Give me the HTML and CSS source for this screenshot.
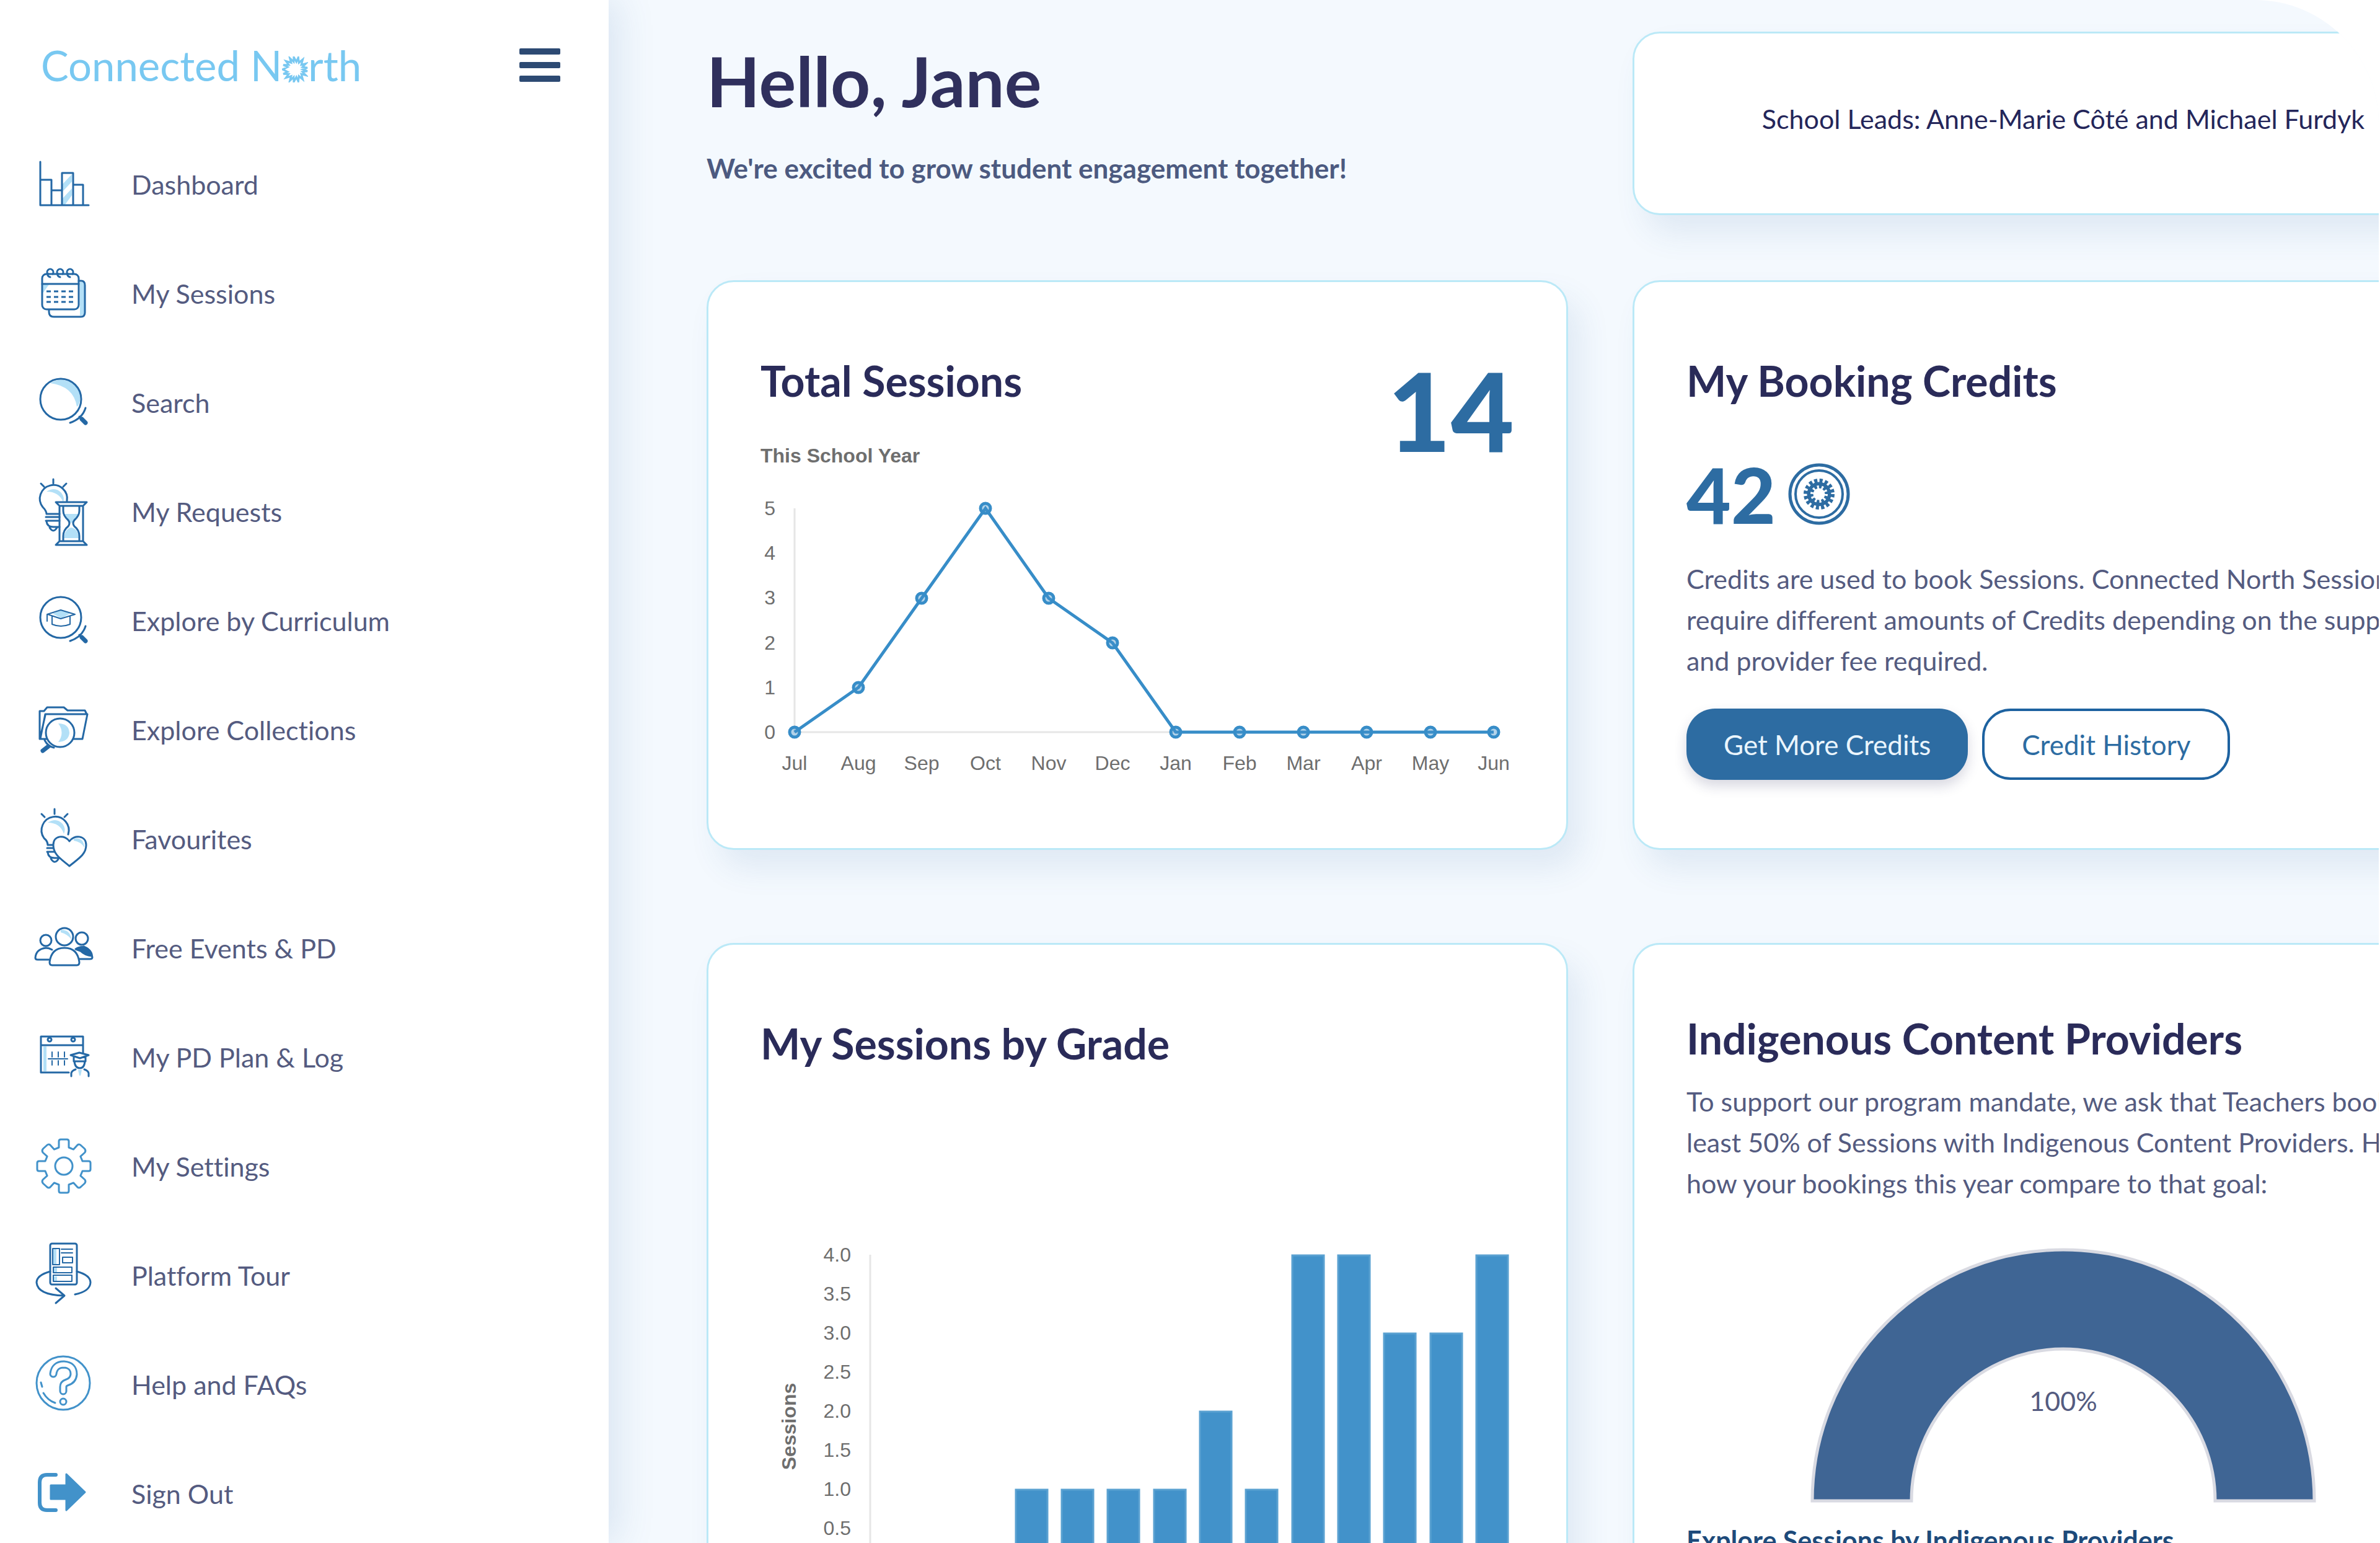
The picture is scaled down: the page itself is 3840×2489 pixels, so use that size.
FILE: index.html
```html
<!DOCTYPE html>
<html lang="en">
  <head>
    <meta charset="UTF-8" />
    <meta name="viewport" content="width=device-width, initial-scale=1.0" />
    <title>Connected North</title>

    <link rel="stylesheet" href="styles.css">
  </head>
  <body>
    <aside class="sidebar">
      <div class="sidebar-head">
        <a href="#" class="logo" aria-label="Connected North">
          Connected N<svg class="logo-sun" viewBox="0 0 40 40" aria-hidden="true">
            <path d="M32.0 20.0L39.0 22.5L31.4 23.7L36.7 29.0L29.7 27.1L31.9 35.3L26.0 30.4L25.0 38.3L22.1 31.8L18.1 39.0L17.9 31.8L12.1 37.3L14.0 30.4L6.1 32.8L10.3 27.1L2.0 26.8L8.6 23.7L1.0 20.0L8.6 16.3L2.0 13.2L10.3 12.9L6.1 7.2L14.0 9.6L12.1 2.7L17.9 8.2L18.1 1.0L22.1 8.2L25.0 1.7L26.0 9.6L31.9 4.7L29.7 12.9L36.7 11.0L31.4 16.3L39.0 17.5Z" stroke-width="3" />
          </svg>rth
        </a>
        <button class="menu-btn" aria-label="Toggle menu">
          <span></span>
          <span></span>
          <span></span>
        </button>
      </div>

      <nav>
        <ul class="nav">
          <li>
            <a href="#">
              <svg class="icon" viewBox="0 0 100 100">
                <path class="tint" d="M48 50L63 34V46L48 62ZM48 73L63 57V68L52 83H48Z" />
                <path d="M12 14V84H90M12 43H30V84M30 60H47M47 84V32H65V84M65 51H81V84" />
              </svg>
              <span>Dashboard</span>
            </a>
          </li>
          <li>
            <a href="#">
              <svg class="icon" viewBox="0 0 100 100">
                <path class="tint" d="M76 32H80Q83 32 83 37V80Q83 86 76 86ZM16 36H26L16 50Z" />
                <rect x="15" y="19" width="59" height="57" rx="7" />
                <path d="M15 35H74M74 30H78Q84 30 84 37V81Q84 88 77 88H34Q26 88 26 80V77" />
                <path d="M24 19A5 5 0 1 1 32 19M28 24Q23 23 24 18M40 19A5 5 0 1 1 48 19M44 24Q39 23 40 18M56 19A5 5 0 1 1 64 19M60 24Q55 23 56 18" />
                <path class="dots" d="M22 47H66M22 56H66M22 64H66" />
              </svg>
              <span>My Sessions</span>
            </a>
          </li>
          <li>
            <a href="#">
              <svg class="icon" viewBox="0 0 100 100">
                <path class="tint" d="M28 19Q44 9 60 17Q78 27 76 47Q74 56 71 57Q66 24 28 19Z" />
                <circle cx="45" cy="45" r="33" />
                <path d="M60 83Q80 76 85 59M75 73L86 84" />
                <path stroke-width="7" d="M79 77L85 83" />
              </svg>
              <span>Search</span>
            </a>
          </li>
          <li>
            <a href="#">
              <svg class="icon" viewBox="0 0 100 100">
                <path class="tint" d="M22 18Q36 9 46 20Q52 28 49 35Q42 18 22 18Z" />
                <path d="M33 -2V5M13 5L18 10M54 5L49 10M22 54Q22 49 16 43A22 22 0 1 1 55 33M22 54H43M21 59H43M21 65H43M22 66Q23 75 33 75H43M27 76Q33 86 39 76" />
                <path class="tint" d="M51 54H73L64 68H60ZM50 93Q52 78 62 76Q73 78 74 93Z" />
                <path d="M37 35H87L81 41H43ZM37 104H87L81 98H43ZM43 41V98M81 41V98M49 42V49Q49 57 57 64Q61 69 57 74Q49 80 49 90V97M75 42V49Q75 57 67 64Q63 69 67 74Q75 80 75 90V97" />
              </svg>
              <span>My Requests</span>
            </a>
          </li>
          <li>
            <a href="#">
              <svg class="icon" viewBox="0 0 100 100">
                <path class="tint" d="M32 39L46 33L60 39L46 46Z" />
                <circle cx="45" cy="45" r="33" />
                <path stroke-width="2" d="M23 51V40L45 33L68 40L45 47L24 40M31 43V56Q45 62 60 56V43" />
                <path d="M60 83Q80 76 85 59M75 73L86 84" />
                <path stroke-width="7" d="M79 77L85 83" />
              </svg>
              <span>Explore by Curriculum</span>
            </a>
          </li>
          <li>
            <a href="#">
              <svg class="icon" viewBox="0 0 100 100">
                <path d="M20 25H88L80 65H12ZM11 65V20H18L23 14H50L56 19H84L87 25M12 62L20 27" />
                <circle class="paper" cx="44" cy="55" r="23" />
                <path class="tint" d="M41 40Q58 40 59 55Q58 69 41 70Q52 55 41 40Z" />
                <path d="M19 67Q24 77 34 79" />
                <path stroke-width="7" d="M25 77L16 84" />
              </svg>
              <span>Explore Collections</span>
            </a>
          </li>
          <li>
            <a href="#">
              <svg class="icon" viewBox="0 0 100 100">
                <path class="tint" d="M24 24Q38 15 48 26Q54 34 50 42Q44 24 24 24Z" />
                <path d="M35 2V10M14 10L19 15M56 10L51 15M24 60Q24 54 18 49A22 22 0 1 1 57 43M24 60H36M23 65H36M23 71H38M24 72Q25 81 35 81H44M29 82Q35 92 41 83" />
                <path class="paper" d="M59 54C52 43 33 44 33 60C33 76 46 83 59 94C72 83 86 76 86 60C86 44 66 43 59 54Z" />
                <path class="tint" d="M66 50Q82 47 83 64Q78 55 66 53Z" />
              </svg>
              <span>Favourites</span>
            </a>
          </li>
          <li>
            <a href="#">
              <svg class="icon" viewBox="0 0 100 100">
                <path class="tint" d="M45 21Q60 20 62 36Q56 28 45 25Z" />
                <circle cx="51" cy="32" r="14" />
                <circle cx="21" cy="38" r="9" />
                <circle cx="79" cy="35" r="10" />
                <path d="M31 53Q26 50 21 50Q5 52 4 66Q4 69 8 69H26M74 68H92Q96 68 96 65Q94 52 82 48" />
                <path fill="#2468a5" d="M69 52Q80 45 89 52Q96 58 95 63Q84 62 77 55Z" />
                <path class="paper" d="M31 78Q27 78 27 73Q30 50 51 50Q72 50 75 73Q75 78 71 78Z" />
              </svg>
              <span>Free Events &amp; PD</span>
            </a>
          </li>
          <li>
            <a href="#">
              <svg class="icon" viewBox="0 0 100 100">
                <path class="tint" d="M17 33H22V73H17Z" />
                <path d="M58 75H13V17H81V43M13 31H81" />
                <path stroke-width="2" d="M25 53H56M31 42V50M41 42V50M51 42V50M31 56V63M41 56V63M51 56V63" />
                <circle cx="27" cy="22" r="3" />
                <circle cx="65" cy="22" r="3" />
                <path class="tint" d="M73 71H79L77 80H75Z" />
                <path d="M61 47L75 43L90 47L76 52ZM66 50V57H85V50M67 57Q68 68 76 68Q83 68 84 57M62 81V76Q63 72 69 70M90 81V76Q89 72 83 70" />
              </svg>
              <span>My PD Plan &amp; Log</span>
            </a>
          </li>
          <li>
            <a href="#">
              <svg class="icon icon-light" viewBox="-50 -50 100 100">
                <path d="M-8 -30V-40Q-8 -43 -5 -43H5Q8 -43 8 -40V-30L15.6 -26.9L22 -34Q25 -36.500 28 -33L33.500 -28Q36 -25 34 -22L26.900 -15.600L30 -8H40Q43 -8 43 -5V5Q43 8 40 8H30L26.900 15.600L34 22Q36 25 33.500 28L28 33Q25 36.500 22 34L15.600 26.900L8 30V40Q8 43 5 43H-5Q-8 43 -8 40V30L-15.600 26.900L-22 34Q-25 36.500 -28 33L-33.500 28Q-36 25 -34 22L-26.900 15.600L-30 8H-40Q-43 8 -43 5V-5Q-43 -8 -40 -8H-30L-26.900 -15.600L-34 -22Q-36 -25 -33.500 -28L-28 -33Q-25 -36.500 -22 -34L-15.600 -26.900Z" />
                <circle r="14" />
              </svg>
              <span>My Settings</span>
            </a>
          </li>
          <li>
            <a href="#">
              <svg class="icon" viewBox="0 0 100 100">
                <path class="tint" d="M33 8H38V32H33ZM33 38H39V45H33ZM33 52H39V59H33Z" />
                <rect x="28" y="-1" width="43" height="66" rx="3" />
                <path stroke-width="2" d="M32 7H43V33H32ZM46 8H64M46 14H64M48 21H64V30H48ZM33 37H63V46H33ZM33 50H63V60H33Z" />
                <path d="M28 44Q6 50 6 62Q8 82 50 83M71 44Q93 50 93 62Q92 76 68 81M37 71L51 83L37 95" />
              </svg>
              <span>Platform Tour</span>
            </a>
          </li>
          <li>
            <a href="#">
              <svg class="icon icon-light" viewBox="0 0 100 100">
                <circle cx="49" cy="48" r="43" />
                <path stroke-width="13" d="M33 33Q35 18 50 18Q66 19 66 34Q65 44 55 47Q49 49 49 54V61" />
                <path class="cutout" stroke-width="7" d="M33 33Q35 18 50 18Q66 19 66 34Q65 44 55 47Q49 49 49 54V61" />
                <circle cx="49" cy="78" r="5" />
                <path d="M13 47L15 54M17 64Q24 76 36 80" />
              </svg>
              <span>Help and FAQs</span>
            </a>
          </li>
          <li>
            <a href="#">
              <svg class="icon icon-light" viewBox="0 0 100 100">
                <path stroke-width="6" d="M37 20H23Q11 20 11 32V65Q11 77 23 77H37" />
                <path fill="#4292ca" d="M29 37H54V19L84 48L54 77V59H29Z" />
              </svg>
              <span>Sign Out</span>
            </a>
          </li>
        </ul>
      </nav>
    </aside>

    <main class="main">
      <div class="grid grid-head">
        <header class="welcome">
          <h1>Hello, Jane</h1>
          <p>We're excited to grow student engagement together!</p>
        </header>
        <section class="card leads">
          <p>School Leads: Anne-Marie Côté and Michael Furdyk</p>
        </section>
      </div>

      <div class="grid">
        <section class="card">
          <div class="total">
            <div>
              <h2>Total Sessions</h2>
              <p class="chart-title">This School Year</p>
            </div>
            <strong class="total-count">14</strong>
          </div>
          <svg class="chart" viewBox="0 0 1216 500" role="img" aria-label="Sessions per month">
            <path class="axis" d="M55 65V426H1183" />
            <g class="labels labels-y">
              <text x="24" y="76">5</text>
              <text x="24" y="148">4</text>
              <text x="24" y="220">3</text>
              <text x="24" y="293">2</text>
              <text x="24" y="365">1</text>
              <text x="24" y="437">0</text>
            </g>
            <g class="labels labels-x">
              <text x="55" y="487">Jul</text>
              <text x="158" y="487">Aug</text>
              <text x="260" y="487">Sep</text>
              <text x="363" y="487">Oct</text>
              <text x="465" y="487">Nov</text>
              <text x="568" y="487">Dec</text>
              <text x="670" y="487">Jan</text>
              <text x="773" y="487">Feb</text>
              <text x="876" y="487">Mar</text>
              <text x="978" y="487">Apr</text>
              <text x="1081" y="487">May</text>
              <text x="1183" y="487">Jun</text>
            </g>
            <g class="line">
              <polyline points="55,426 158,354 260,210 363,65 465,210 568,282 670,426 1183,426" />
              <circle cx="55" cy="426" r="8" />
              <circle cx="158" cy="354" r="8" />
              <circle cx="260" cy="210" r="8" />
              <circle cx="363" cy="65" r="8" />
              <circle cx="465" cy="210" r="8" />
              <circle cx="568" cy="282" r="8" />
              <circle cx="670" cy="426" r="8" />
              <circle cx="773" cy="426" r="8" />
              <circle cx="876" cy="426" r="8" />
              <circle cx="978" cy="426" r="8" />
              <circle cx="1081" cy="426" r="8" />
              <circle cx="1183" cy="426" r="8" />
            </g>
          </svg>
        </section>

        <section class="card">
          <h2>My Booking Credits</h2>
          <div class="credits">
            <strong>42</strong>
            <svg class="coin" viewBox="0 0 100 100" aria-hidden="true">
              <circle cx="50" cy="50" r="47" stroke-width="5" />
              <circle cx="50" cy="50" r="38" stroke-width="4" />
              <circle cx="50" cy="50" r="14.500" stroke-width="10" />
              <circle cx="50" cy="50" r="21.500" stroke-width="7" stroke-dasharray="5 3.443" />
              <circle class="coin-hole" cx="50" cy="50" r="11.500" stroke-width="5" stroke-dasharray="3 4.226" />
            </svg>
          </div>
          <p class="copy">
            Credits are used to book Sessions. Connected North Sessions<br />
            require different amounts of Credits depending on the support<br />
            and provider fee required.
          </p>
          <div class="actions">
            <button class="btn btn-primary">Get More Credits</button>
            <button class="btn btn-outline">Credit History</button>
          </div>
        </section>

        <section class="card">
          <h2>My Sessions by Grade</h2>
          <svg class="chart chart-grade" viewBox="0 0 1216 660" role="img" aria-label="Sessions by grade">
            <path class="axis" d="M177 64V568H1218" />
            <text class="axis-title" transform="translate(57 341) rotate(-90)">Sessions</text>
            <g class="labels labels-y">
              <text x="146" y="75">4.0</text>
              <text x="146" y="138">3.5</text>
              <text x="146" y="201">3.0</text>
              <text x="146" y="264">2.5</text>
              <text x="146" y="327">2.0</text>
              <text x="146" y="390">1.5</text>
              <text x="146" y="453">1.0</text>
              <text x="146" y="516">0.5</text>
              <text x="146" y="579">0.0</text>
            </g>
            <g class="bars">
              <rect x="412" y="443" width="51" height="125" />
              <rect x="486" y="443" width="51" height="125" />
              <rect x="560" y="443" width="51" height="125" />
              <rect x="635" y="443" width="51" height="125" />
              <rect x="709" y="317" width="51" height="251" />
              <rect x="783" y="443" width="51" height="125" />
              <rect x="858" y="65" width="51" height="503" />
              <rect x="932" y="65" width="51" height="503" />
              <rect x="1006" y="191" width="51" height="377" />
              <rect x="1081" y="191" width="51" height="377" />
              <rect x="1155" y="65" width="51" height="503" />
            </g>
          </svg>
        </section>

        <section class="card card-providers">
          <h2>Indigenous Content Providers</h2>
          <p class="copy">
            To support our program mandate, we ask that Teachers book at<br />
            least 50% of Sessions with Indigenous Content Providers. Here's<br />
            how your bookings this year compare to that goal:
          </p>
          <svg class="chart chart-gauge" viewBox="0 0 1216 420" role="img" aria-label="100% of bookings">
            <path class="gauge" d="M203 415A405 405 0 0 1 1013 415H853A245 245 0 0 0 363 415Z" />
            <text class="gauge-value" x="608" y="270">100%</text>
          </svg>
          <a href="#" class="more">Explore Sessions by Indigenous Providers</a>
        </section>
      </div>
    </main>
  </body>
</html>
```

FILE: styles.css
```css
*,
*::after,
*::before {
  margin: 0;
  padding: 0;
  box-sizing: border-box;
}

:root {
  --font: "Lato", sans-serif;
  --chart-font: "Liberation Sans", Arial, sans-serif;

  --heading: #2a2b59;
  --text: #545b80;
  --muted: #6e6e6e;
  --blue: #2d6ca2;
  --blue-light: #4292ca;
  --tint: #b3e0f7;
  --card-border: #bbe9f7;
  --bg: #f4f9fe;
}

body {
  display: flex;
  height: 100vh;
  overflow: hidden;
  background: #fff;
  color: var(--text);
  font-family: var(--font);
  font-size: 43px;
  font-variant-ligatures: none;
}

a {
  color: inherit;
  text-decoration: none;
}

button {
  border: none;
  background: none;
  font: inherit;
  cursor: pointer;
}

/* sidebar */

.sidebar {
  position: relative;
  z-index: 1;
  flex: 0 0 982px;
  background: #fff;
  box-shadow: 16px 0 56px rgba(45, 100, 160, 0.13);
}

.sidebar-head {
  display: flex;
  justify-content: space-between;
  align-items: center;
  height: 209px;
  padding: 0 78px 0 66px;
}

.logo {
  color: #78c8f1;
  font-size: 67px;
  line-height: 90px;
  white-space: nowrap;
}

.logo-sun {
  width: 42px;
  height: 42px;
  vertical-align: -2px;
  fill: none;
  stroke: #78c8f1;
}

.menu-btn {
  display: flex;
  flex-direction: column;
  gap: 12px;
}

.menu-btn span {
  width: 66px;
  height: 10px;
  border-radius: 2px;
  background: #2d4a73;
}

.nav {
  list-style: none;
}

.nav a {
  display: flex;
  align-items: center;
  gap: 59px;
  height: 176px;
  padding-left: 53px;
}

.icon {
  width: 100px;
  height: 100px;
  overflow: visible;
  fill: none;
  stroke: #2468a5;
  stroke-width: 3;
  stroke-linejoin: round;
  stroke-linecap: round;
}

.icon-light {
  stroke: var(--blue-light);
}

.icon .tint {
  fill: var(--tint);
  stroke: none;
}

.icon .paper {
  fill: #fff;
}

.icon .cutout {
  stroke: #fff;
}

.icon .dots {
  stroke-dasharray: 7 5;
  stroke-linecap: butt;
}

/* main area */

.main {
  flex: 1;
  min-width: 0;
  margin-right: 2px;
  padding: 51px 0 0 158px;
  overflow: hidden;
  background: var(--bg);
  border-top-right-radius: 200px;
}

/* second column runs past the edge of the window */
.grid {
  display: grid;
  grid-template-columns: 1fr 1fr;
  gap: 150px 104px;
  margin-right: -186px;
}

.grid-head {
  margin-bottom: 105px;
}

.welcome {
  padding-top: 14px;
}

.welcome h1 {
  color: #30305d;
  font-size: 112px;
  line-height: 130px;
}

.welcome p {
  margin-top: 46px;
  color: #4c5a80;
  font-size: 44px;
  font-weight: 700;
  line-height: 60px;
}

.card {
  padding: 122px 84px 110px;
  background: #fff;
  border: 3px solid var(--card-border);
  border-radius: 44px;
  box-shadow: 20px 30px 50px rgba(45, 95, 160, 0.1);
}

.card h2 {
  color: var(--heading);
  font-size: 68px;
  line-height: 74px;
}

.leads {
  display: flex;
  justify-content: center;
  align-items: center;
  height: 296px;
  padding: 0 0 16px;
  color: #24265a;
  white-space: nowrap;
}

.total {
  display: flex;
  justify-content: space-between;
  align-items: flex-start;
}

.total-count {
  height: 168px;
  color: var(--blue);
  font-size: 176px;
  font-weight: 900;
  line-height: 168px;
}

.chart-title {
  margin-top: 64px;
  color: var(--muted);
  font-family: var(--chart-font);
  font-size: 32px;
  font-weight: 700;
  line-height: 40px;
}

.chart {
  display: block;
  width: 100%;
  font-family: var(--chart-font);
  font-size: 32px;
}

.axis {
  fill: none;
  stroke: #e6e6e6;
  stroke-width: 3;
}

.labels {
  fill: var(--muted);
}

.labels-x {
  text-anchor: middle;
}

.labels-y {
  text-anchor: end;
}

.line {
  fill: rgba(66, 146, 202, 0.4);
  stroke: #378dc8;
  stroke-width: 5;
}

.line polyline {
  fill: none;
}

.credits {
  display: flex;
  align-items: center;
  gap: 20px;
  margin-top: 86px;
  color: var(--blue);
  font-size: 124px;
  line-height: 120px;
}

.credits strong {
  font-weight: 900;
}

.coin {
  width: 100px;
  height: 100px;
  fill: none;
  stroke: var(--blue);
}

.coin-hole {
  stroke: #fff;
}

.copy {
  margin-top: 44px;
  line-height: 66px;
  white-space: nowrap;
}

.actions {
  display: flex;
  gap: 23px;
  margin-top: 44px;
}

.btn {
  height: 115px;
  padding: 0 60px;
  border-radius: 46px;
  font-size: 44px;
}

.btn-primary {
  background: var(--blue);
  color: #eaf5fd;
  box-shadow: 0 10px 20px rgba(40, 40, 90, 0.18);
}

.btn-outline {
  border: 4px solid #1d62a0;
  color: var(--blue);
}

.chart-grade {
  margin-top: 240px;
}

.axis-title {
  fill: var(--muted);
  font-weight: 700;
  text-anchor: middle;
}

.bars {
  fill: var(--blue-light);
  stroke: #5aa1d1;
  stroke-width: 3;
}

.card-providers {
  padding-top: 114px;
}

.card-providers .copy {
  margin-top: 32px;
}

.chart-gauge {
  margin-top: 64px;
}

.gauge {
  fill: #3f6594;
  stroke: #d9dae2;
  stroke-width: 5;
}

.gauge-value {
  fill: var(--text);
  font-family: var(--font);
  font-size: 43px;
  text-anchor: middle;
}

.more {
  display: block;
  margin-top: 26px;
  color: #1d4a7a;
  font-weight: 700;
  line-height: 66px;
}
```
